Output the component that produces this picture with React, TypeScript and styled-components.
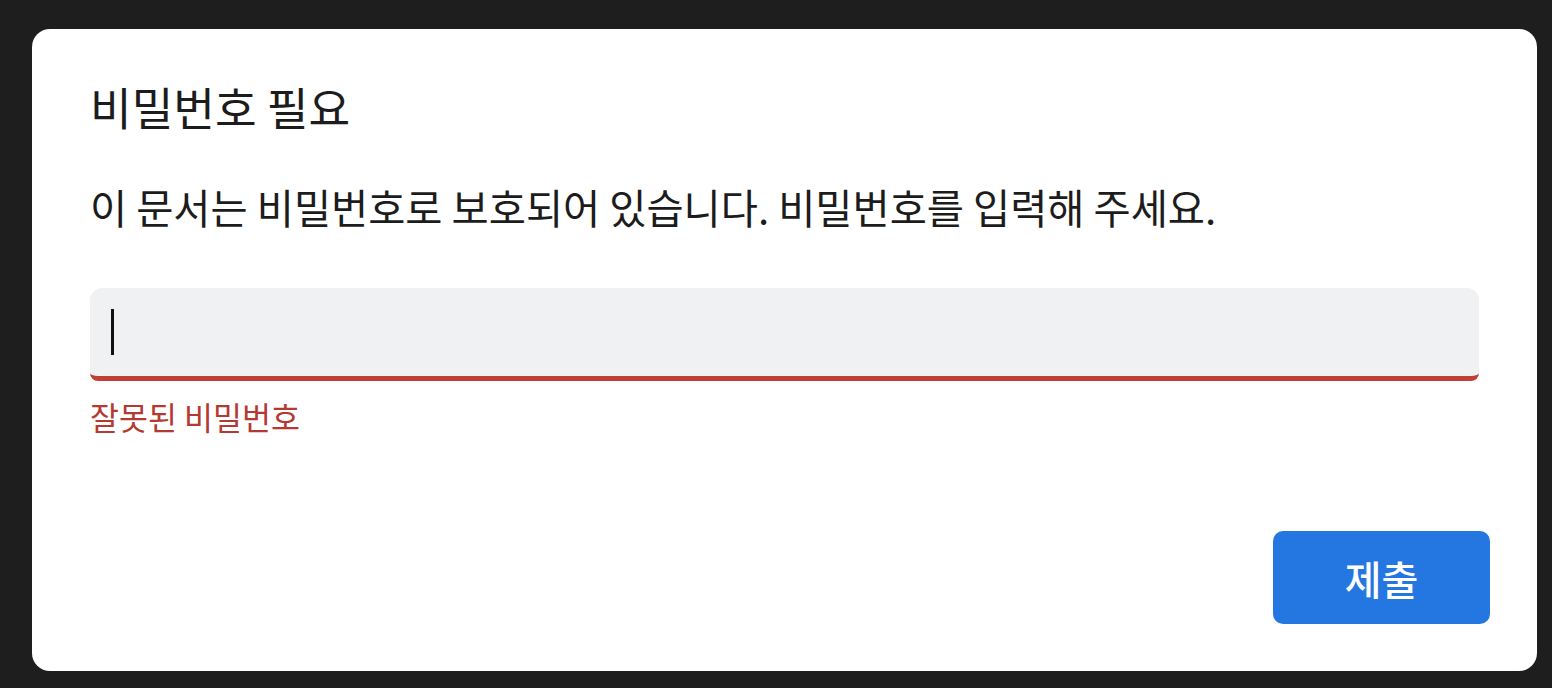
import React from 'react';
import styled, { createGlobalStyle } from 'styled-components';

const GlobalStyle = createGlobalStyle`
  html, body {
    margin: 0;
    padding: 0;
    background: #1e1e1e;
  }
  body {
    font-family: "Noto Sans CJK KR", "Noto Sans", sans-serif;
  }
`;

const Screen = styled.div`
  width: 1552px;
  height: 688px;
  padding: 29px 15px 17px 32px;
  box-sizing: border-box;
  display: flex;
`;

const Dialog = styled.div`
  flex: 1;
  background: #ffffff;
  border-radius: 18px;
  padding: 50px 58px 47px 58px;
  display: flex;
  flex-direction: column;
`;

const Title = styled.h1`
  margin: 0;
  font-size: 45.3px;
  line-height: 54px;
  font-weight: 400;
  color: #1c1c1c;
`;

const Message = styled.p`
  margin: 50px 0 0;
  font-size: 40.4px;
  line-height: 48px;
  font-weight: 400;
  color: #1c1c1c;
`;

const Field = styled.div<{ $invalid?: boolean }>`
  margin-top: 57px;
  height: 88px;
  background: #f0f1f3;
  border-radius: 12px 12px 8px 8px;
  border-bottom: 5px solid ${p => (p.$invalid ? '#bf3f35' : '#c4c7cc')};
  display: flex;
  align-items: center;
  padding: 0 21px;
`;

const Caret = styled.span`
  width: 3px;
  height: 46px;
  background: #111;
`;

const ErrorText = styled.div`
  margin-top: 16px;
  font-size: 31.5px;
  line-height: 38px;
  color: #b33a30;
`;

const Footer = styled.div`
  margin-top: auto;
  margin-right: -11px;
  display: flex;
  justify-content: flex-end;
`;

const SubmitButton = styled.button`
  width: 217px;
  height: 93px;
  border: none;
  border-radius: 10px;
  background: #2477e0;
  color: #fff;
  font-family: inherit;
  font-size: 40px;
  font-weight: 500;
  cursor: pointer;
`;

export default function App() {
  return (
    <>
      <GlobalStyle />
      <Screen>
        <Dialog>
          <Title>비밀번호 필요</Title>
          <Message>이 문서는 비밀번호로 보호되어 있습니다. 비밀번호를 입력해 주세요.</Message>
          <Field $invalid>
            <Caret />
          </Field>
          <ErrorText>잘못된 비밀번호</ErrorText>
          <Footer>
            <SubmitButton>제출</SubmitButton>
          </Footer>
        </Dialog>
      </Screen>
    </>
  );
}
